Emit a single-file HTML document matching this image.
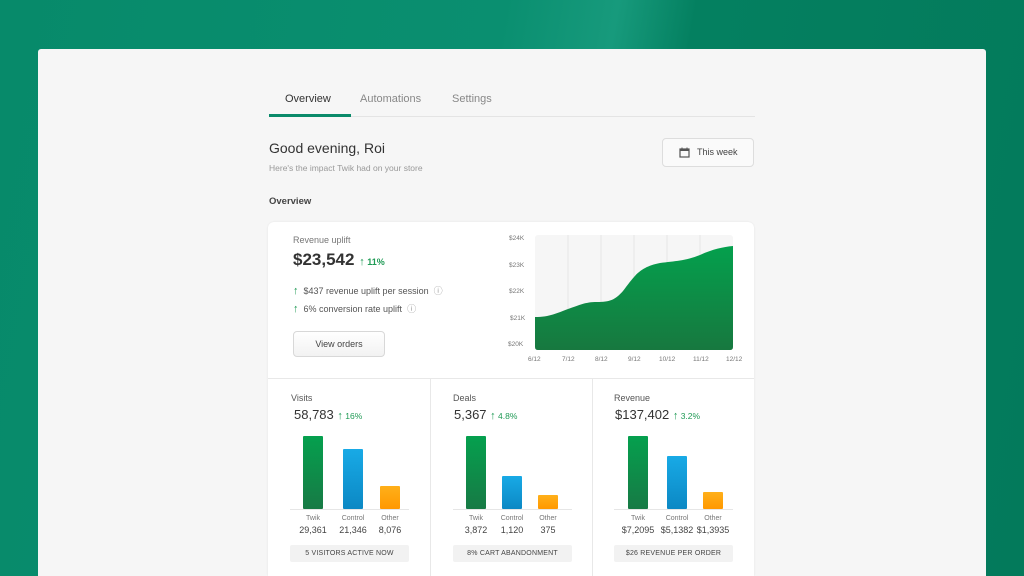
<!DOCTYPE html>
<html><head><meta charset="utf-8"><style>
*{margin:0;padding:0;box-sizing:border-box}
html,body{width:1024px;height:576px;overflow:hidden}
body{font-family:"Liberation Sans",sans-serif;background:#04805f;position:relative}
.bg{position:absolute;left:0;top:0;width:1024px;height:576px;background:linear-gradient(100deg,#078a6a 0%,#0a8f70 45%,#179a7c 55%,#048060 62%,#037a5b 100%)}
.panel{position:absolute;left:38px;top:49px;width:948px;height:527px;background:#f6f6f6;border-radius:3px 3px 0 0}
.a{position:absolute}
.tab{font-size:11px;color:#888;top:93px}
.card{position:absolute;left:268px;top:222px;width:486px;height:354px;background:#fff;border-radius:6px 6px 0 0;box-shadow:0 0 2px rgba(0,0,0,.08)}
.g{color:#1f9a55}
.bar{position:absolute;width:20px;border-radius:1px}
.tw{background:linear-gradient(#05a04e,#177a45)}
.co{background:linear-gradient(#18aae6,#0c88c4)}
.ot{background:linear-gradient(#ffb01a,#ff9800)}
.lbl{font-size:7px;color:#777;text-align:center;width:40px}
.val{font-size:9px;color:#444;text-align:center;width:50px}
.pill{position:absolute;height:17px;background:#f2f2f2;border-radius:2px;font-size:7px;color:#444;text-align:center;line-height:17px;letter-spacing:.2px}
.ax{font-size:6.5px;color:#777}
.ar{font-size:11px;font-weight:bold}
</style></head><body>
<div class="bg"></div>
<div class="panel"></div>
<div class="a tab" style="left:285px;color:#333">Overview</div>
<div class="a tab" style="left:360px">Automations</div>
<div class="a tab" style="left:452px">Settings</div>
<div class="a" style="left:269px;top:116px;width:486px;height:1px;background:#e4e4e4"></div>
<div class="a" style="left:269px;top:114px;width:82px;height:3px;background:#0a8a6a"></div>
<div class="a" style="left:269px;top:140px;font-size:14px;color:#333">Good evening, Roi</div>
<div class="a" style="left:269px;top:163px;font-size:8.5px;color:#999">Here's the impact Twik had on your store</div>
<div class="a" style="left:269px;top:196px;font-size:9.5px;color:#444;font-weight:bold">Overview</div>
<div class="a" style="left:662px;top:138px;width:92px;height:29px;background:#fafafa;border:1px solid #ddd;border-radius:4px;font-size:9px;color:#444;line-height:27px;padding-left:34px">This week
<svg style="position:absolute;left:16px;top:8px" width="11" height="11" viewBox="0 0 11 11"><rect x="1" y="2" width="9" height="8" fill="none" stroke="#555" stroke-width="1.2"/><rect x="1" y="2" width="9" height="2" fill="#555"/><line x1="3" y1="0.5" x2="3" y2="2" stroke="#555"/><line x1="8" y1="0.5" x2="8" y2="2" stroke="#555"/></svg></div>
<div class="card">
<div class="a" style="left:25px;top:13px;font-size:9px;color:#777">Revenue uplift</div>
<div class="a" style="left:25px;top:28px;font-size:17px;color:#333;font-weight:bold">$23,542 <span class="g" style="font-size:9px"><span class="ar">↑</span> 11%</span></div>
<div class="a" style="left:25px;top:62px;font-size:9px;color:#555"><span class="g ar">↑</span>&nbsp; $437 revenue uplift per session &nbsp;<span style="color:#999">ⓘ</span></div>
<div class="a" style="left:25px;top:80px;font-size:9px;color:#555"><span class="g ar">↑</span>&nbsp; 6% conversion rate uplift &nbsp;<span style="color:#999">ⓘ</span></div>
<div class="a" style="left:25px;top:109px;width:92px;height:26px;border:1px solid #d8d8d8;border-radius:4px;background:linear-gradient(#fff,#f2f2f2);font-size:9px;color:#444;text-align:center;line-height:24px">View orders</div>
<div class="a" style="left:0;top:156px;width:486px;height:1px;background:#e8e8e8"></div>
<div class="a" style="left:162px;top:156px;width:1px;height:198px;background:#e8e8e8"></div>
<div class="a" style="left:324px;top:156px;width:1px;height:198px;background:#e8e8e8"></div>
</div>
<div class="a ax" style="left:509px;top:235px">$24K</div>
<div class="a ax" style="left:509px;top:262px">$23K</div>
<div class="a ax" style="left:509px;top:288px">$22K</div>
<div class="a ax" style="left:510px;top:315px">$21K</div>
<div class="a ax" style="left:508px;top:341px">$20K</div>
<svg class="a" style="left:535px;top:235px" width="198" height="115" viewBox="0 0 198 115">
<defs><linearGradient id="ag" x1="0" y1="0" x2="0" y2="1"><stop offset="0" stop-color="#04a04d"/><stop offset="1" stop-color="#17783f"/></linearGradient></defs>
<rect width="198" height="115" rx="3" fill="#f6f6f6"/>
<g stroke="#e6e6e6"><line x1="33" y1="0" x2="33" y2="115"/><line x1="66" y1="0" x2="66" y2="115"/><line x1="99" y1="0" x2="99" y2="115"/><line x1="132" y1="0" x2="132" y2="115"/><line x1="165" y1="0" x2="165" y2="115"/></g>
<path d="M0,82 C15,82 22,78 33,74 C45,70 50,67 62,67 C75,67 80,65 88,56 C100,40 105,32 125,28 C140,26 150,26 165,20 C178,14 188,12 198,11 L198,112 Q198,115 195,115 L3,115 Q0,115 0,112 Z" fill="url(#ag)"/>
</svg>
<div class="a ax" style="left:528px;top:356px">6/12</div>
<div class="a ax" style="left:562px;top:356px">7/12</div>
<div class="a ax" style="left:595px;top:356px">8/12</div>
<div class="a ax" style="left:628px;top:356px">9/12</div>
<div class="a ax" style="left:659px;top:356px">10/12</div>
<div class="a ax" style="left:693px;top:356px">11/12</div>
<div class="a ax" style="left:726px;top:356px">12/12</div>
<!-- Visits -->
<div class="a" style="left:291px;top:393px;font-size:9px;color:#555">Visits</div>
<div class="a" style="left:294px;top:407px;font-size:13px;color:#333">58,783 <span class="g" style="font-size:8.5px"><span class="ar">↑</span> 16%</span></div>
<div class="a" style="left:290px;top:509px;width:119px;height:1px;background:#e6e6e6"></div>
<div class="bar tw" style="left:303px;top:436px;height:73px"></div><div class="bar co" style="left:343px;top:449px;height:60px"></div><div class="bar ot" style="left:380px;top:486px;height:23px"></div>
<div class="a lbl" style="left:293px;top:515px">Twik</div><div class="a lbl" style="left:333px;top:515px">Control</div><div class="a lbl" style="left:370px;top:515px">Other</div>
<div class="a val" style="left:288px;top:525px">29,361</div><div class="a val" style="left:328px;top:525px">21,346</div><div class="a val" style="left:365px;top:525px">8,076</div>
<div class="pill" style="left:290px;top:545px;width:119px">5 VISITORS ACTIVE NOW</div>
<!-- Deals -->
<div class="a" style="left:453px;top:393px;font-size:9px;color:#555">Deals</div>
<div class="a" style="left:454px;top:407px;font-size:13px;color:#333">5,367 <span class="g" style="font-size:8.5px"><span class="ar">↑</span> 4.8%</span></div>
<div class="a" style="left:453px;top:509px;width:119px;height:1px;background:#e6e6e6"></div>
<div class="bar tw" style="left:466px;top:436px;height:73px"></div><div class="bar co" style="left:502px;top:476px;height:33px"></div><div class="bar ot" style="left:538px;top:495px;height:14px"></div>
<div class="a lbl" style="left:456px;top:515px">Twik</div><div class="a lbl" style="left:492px;top:515px">Control</div><div class="a lbl" style="left:528px;top:515px">Other</div>
<div class="a val" style="left:451px;top:525px">3,872</div><div class="a val" style="left:487px;top:525px">1,120</div><div class="a val" style="left:523px;top:525px">375</div>
<div class="pill" style="left:453px;top:545px;width:119px">8% CART ABANDONMENT</div>
<!-- Revenue -->
<div class="a" style="left:614px;top:393px;font-size:9px;color:#555">Revenue</div>
<div class="a" style="left:615px;top:407px;font-size:13px;color:#333">$137,402 <span class="g" style="font-size:8.5px"><span class="ar">↑</span> 3.2%</span></div>
<div class="a" style="left:614px;top:509px;width:119px;height:1px;background:#e6e6e6"></div>
<div class="bar tw" style="left:628px;top:436px;height:73px"></div><div class="bar co" style="left:667px;top:456px;height:53px"></div><div class="bar ot" style="left:703px;top:492px;height:17px"></div>
<div class="a lbl" style="left:618px;top:515px">Twik</div><div class="a lbl" style="left:657px;top:515px">Control</div><div class="a lbl" style="left:693px;top:515px">Other</div>
<div class="a val" style="left:613px;top:525px">$7,2095</div><div class="a val" style="left:652px;top:525px">$5,1382</div><div class="a val" style="left:688px;top:525px">$1,3935</div>
<div class="pill" style="left:614px;top:545px;width:119px">$26 REVENUE PER ORDER</div>
</body></html>
